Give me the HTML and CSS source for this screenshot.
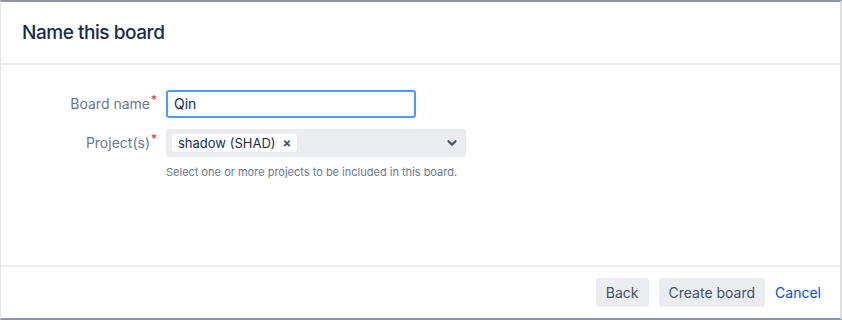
FILE: index.html
```html
<!DOCTYPE html>
<html>
<head>
<meta charset="utf-8">
<link rel="stylesheet" href="styles.css">
</head>
<body>
<div class="dialog">
  <header class="dialog-header">
    <h2 class="dialog-title">Name this board</h2>
  </header>
  <main class="dialog-body">
    <div class="form-row">
      <label class="field-label">Board name<span class="req">*</span></label>
      <div class="field">
        <div class="text-input">Qin</div>
      </div>
    </div>
    <div class="form-row">
      <label class="field-label">Project(s)<span class="req">*</span></label>
      <div class="field">
        <div class="select">
          <span class="tag">shadow (SHAD)<span class="tag-x">×</span></span>
          <svg class="chev" width="12" height="12" viewBox="0 0 12 12"><path d="M2.5 4.2 L6 7.6 L9.5 4.2" fill="none" stroke="#42526e" stroke-width="2.2" stroke-linecap="round" stroke-linejoin="round"/></svg>
        </div>
        <div class="help">Select one or more projects to be included in this board.</div>
      </div>
    </div>
  </main>
  <footer class="dialog-footer">
    <button class="btn">Back</button>
    <button class="btn">Create board</button>
    <button class="btn link">Cancel</button>
  </footer>
</div>
</body>
</html>
```

FILE: styles.css
```css
html, body {
  margin: 0;
  padding: 0;
  background: #fff;
}
body {
  font-family: Inter, "Noto Sans", sans-serif;
  color: #172b4d;
}
.dialog {
  box-sizing: border-box;
  width: 842px;
  height: 320px;
  border-top: 2px solid #8e96a7;
  border-bottom: 2px solid #8e96a7;
  border-left: 1px solid #e3e5ea;
  border-right: 2px solid #dcdfe4;
  display: flex;
  flex-direction: column;
}
.dialog-header {
  height: 61px;
  border-bottom: 2px solid #ebecf0;
  display: flex;
  align-items: center;
  padding-left: 21px;
}
.dialog-title {
  margin: 0;
  font-size: 19px;
  font-weight: 500;
  color: #172b4d;
  letter-spacing: -0.45px;
}
.dialog-body {
  flex: 1;
  padding-top: 25px;
  border-bottom: 2px solid #ebecf0;
}
.form-row {
  display: grid;
  grid-template-columns: 156px 300px;
  column-gap: 9px;
  align-items: start;
  margin-bottom: 11px;
}
.field-label {
  display: block;
  height: 28px;
  text-align: right;
  font-size: 14px;
  color: #6b778c;
  line-height: 27px;
  white-space: nowrap;
}
.req {
  color: #de350b;
  font-size: 12px;
  line-height: 0;
  vertical-align: 5px;
  margin-left: 1px;
}
.text-input {
  box-sizing: border-box;
  width: 250px;
  height: 28px;
  border: 2px solid #4c9aff;
  border-radius: 3px;
  padding-left: 6px;
  font-size: 14px;
  line-height: 24px;
  color: #172b4d;
}
.select {
  box-sizing: border-box;
  width: 300px;
  height: 28px;
  background: #ebecf0;
  border-radius: 3px;
  display: flex;
  align-items: center;
  padding: 0 6px;
  justify-content: space-between;
}
.tag {
  background: #fff;
  border-radius: 3px;
  height: 18px;
  display: inline-flex;
  align-items: center;
  gap: 7px;
  padding: 0 6px 0 6px;
  font-size: 13px;
  color: #172b4d;
  white-space: nowrap;
}
.tag-x {
  font-size: 13px;
  font-weight: 700;
  color: #42526e;
}
.chev {
  margin-right: 2px;
}
.help {
  margin-top: 8px;
  font-size: 11px;
  color: #6b778c;
}
.dialog-footer {
  height: 51px;
  display: flex;
  justify-content: flex-end;
  align-items: center;
  gap: 10px;
  padding-right: 19px;
}
.btn {
  font-family: inherit;
  font-size: 14px;
  color: #42526e;
  background: #ebecf0;
  border: none;
  border-radius: 3px;
  height: 29px;
  padding: 0 10px;
  margin: 0;
}
.btn.link {
  background: none;
  color: #0052cc;
  padding: 0;
}
```
